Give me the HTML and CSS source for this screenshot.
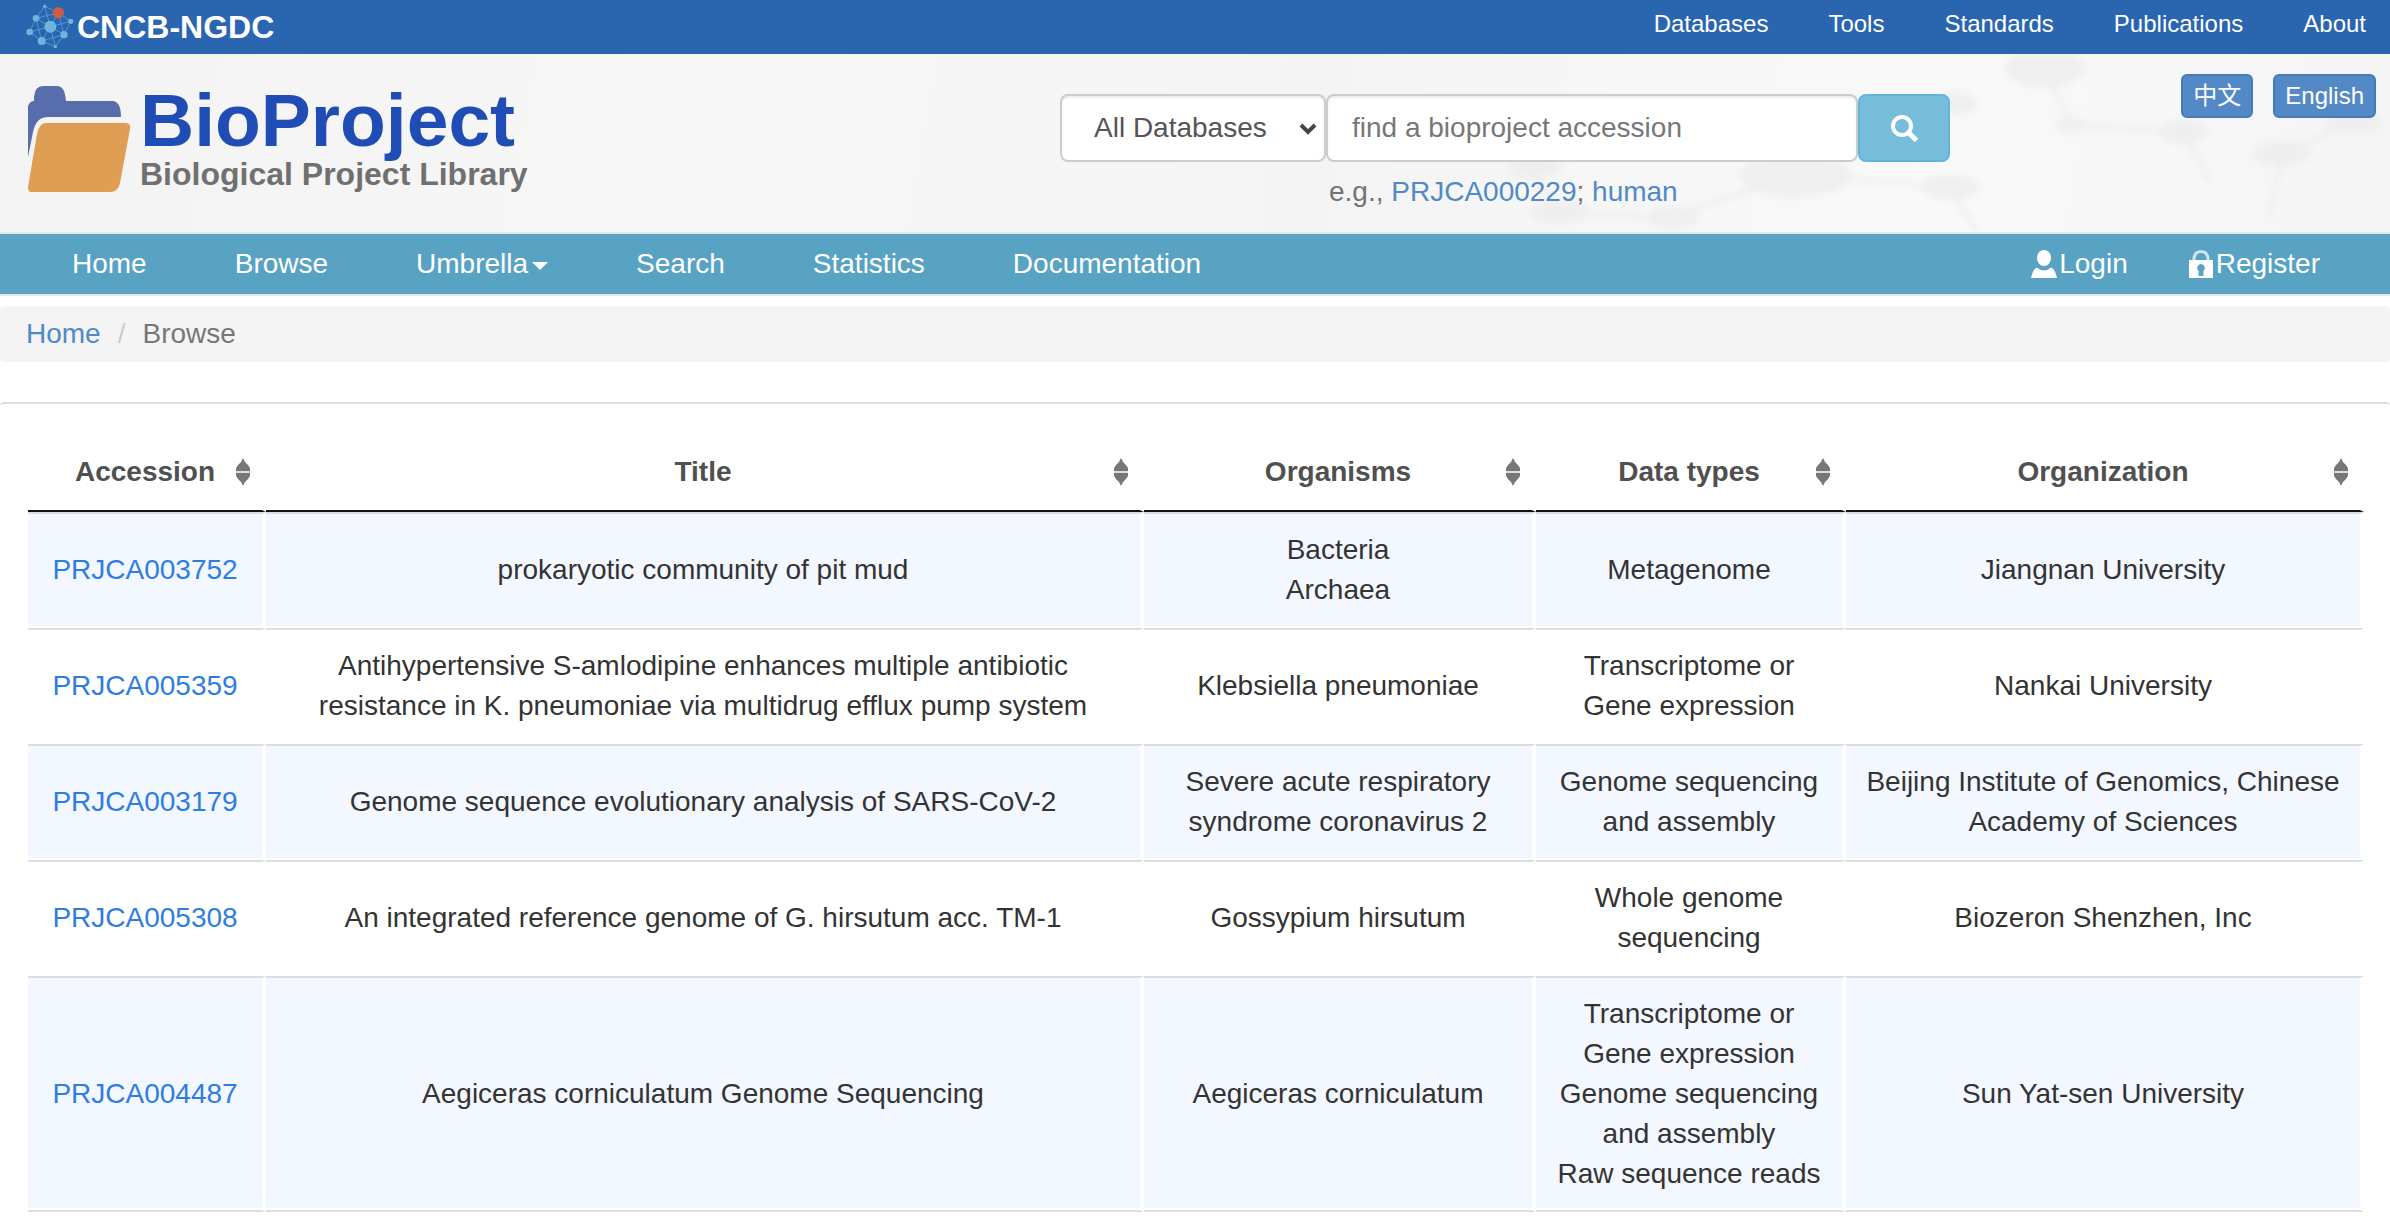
FILE: index.html
```html
<!DOCTYPE html>
<html lang="en">
<head>
<meta charset="utf-8">
<meta name="viewport" content="width=device-width, initial-scale=1">
<title>Browse - BioProject - CNCB-NGDC</title>
<link rel="stylesheet" href="styles.css">
</head>
<body>
<svg class="sprite" aria-hidden="true">
  <symbol id="sort" viewBox="0 0 14 28"><path d="M7 0L9 4L12 7L14 10V13H0V10L2 7L5 4Z M7 28L9 24L12 21L14 18V15H0V18L2 21L5 24Z" fill="#777"/><path d="M0 13H14V15H0Z" fill="#ddd"/></symbol>
</svg>

<div class="topbar">
  <a class="org" href="#">
    <svg class="org-mark" viewBox="78 12 144 132" aria-hidden="true">
      <g stroke="#6db5dc" stroke-width="2.500" fill="none" opacity=".75">
        <path d="M134 19L175 38L212 64L192 104L166 140L125 123L89 96L108 55Z"/>
        <path d="M151 80L134 19M151 80L175 38M151 80L108 55M151 80L212 64M151 80L89 96M151 80L192 104M151 80L125 123M151 80L166 140M108 55L125 123M175 38L192 104M125 123L192 104M108 55L175 38"/>
      </g>
      <g fill="#6db5dc">
        <circle cx="134" cy="19" r="5"/><circle cx="108" cy="55" r="10"/><circle cx="212" cy="64" r="8"/>
        <circle cx="151" cy="80" r="18"/><circle cx="89" cy="96" r="10"/><circle cx="192" cy="104" r="11"/>
        <circle cx="125" cy="123" r="12"/><circle cx="166" cy="140" r="5"/>
      </g>
      <circle cx="175" cy="38" r="17" fill="#cd5b45"/>
    </svg>
    <span>CNCB-NGDC</span>
  </a>
  <nav class="toplinks" aria-label="Resources">
    <a href="#">Databases</a><a href="#">Tools</a><a href="#">Standards</a><a href="#">Publications</a><a href="#">About</a>
  </nav>
</div>

<header class="masthead">
  <svg class="molecules" viewBox="0 0 880 178" aria-hidden="true">
    <g stroke="#ededed" stroke-width="6" fill="none">
      <path d="M534 18L562 71L673 78L700 126M772 99L760 160M772 99L843 69M285 121L440 133L467 178M285 121L190 153L163 164L50 158L21 113"/>
    </g>
    <g fill="#ececec">
      <ellipse cx="535" cy="14" rx="40" ry="20"/><ellipse cx="562" cy="71" rx="18" ry="8"/>
      <ellipse cx="673" cy="78" rx="25" ry="12"/><ellipse cx="772" cy="99" rx="30" ry="13"/>
      <ellipse cx="843" cy="69" rx="30" ry="11"/><ellipse cx="440" cy="133" rx="30" ry="13"/>
      <ellipse cx="285" cy="121" rx="56" ry="23"/><ellipse cx="163" cy="164" rx="27" ry="12"/>
      <ellipse cx="50" cy="158" rx="30" ry="12"/><ellipse cx="21" cy="113" rx="30" ry="12"/>
      <ellipse cx="445" cy="49" rx="24" ry="12"/>
    </g>
  </svg>
  <a class="brand" href="#">
    <svg class="folder" viewBox="0 0 104 108" aria-hidden="true">
      <path d="M0 22Q2 17 6 17V13Q7 2 15 2H29Q37 2 38 17H85Q93 18 93 33H20Q8 33 5 48L0 73Z" fill="#586eac"/>
      <path d="M17 39H98Q103 39 102 45L92 99Q90 108 82 108H3Q0 108 0 103L9 50Q11 40 17 39Z" fill="#e09d54"/>
    </svg>
    <span class="brand-text">
      <span class="brand-name">BioProject</span>
      <span class="brand-sub">Biological Project Library</span>
    </span>
  </a>
  <div class="search">
    <form class="search-form" onsubmit="return false">
      <div class="select-wrap">
        <select class="field" aria-label="Database"><option>All Databases</option></select>
        <svg class="chevron" viewBox="0 0 18 12" aria-hidden="true"><path d="M2 2L9 9L16 2" fill="none" stroke="#444" stroke-width="4"/></svg>
      </div>
      <input class="field query" type="text" aria-label="Search term" placeholder="find a bioproject accession">
      <button class="go" type="submit" aria-label="Search">
        <svg viewBox="0 0 28 28" aria-hidden="true"><g fill="none" stroke="#fff"><circle cx="12" cy="12" r="9" stroke-width="4"/><path d="M18.500 18.500L26.500 26.500" stroke-width="5"/></g></svg>
      </button>
    </form>
    <p class="hint">e.g., <a href="#">PRJCA000229</a>; <a href="#">human</a></p>
  </div>
  <div class="langs">
    <button type="button" lang="zh">中文</button>
    <button type="button">English</button>
  </div>
</header>

<nav class="mainnav" aria-label="Main">
  <ul class="menu">
    <li><a href="#">Home</a></li>
    <li><a href="#">Browse</a></li>
    <li><a href="#">Umbrella<span class="caret"></span></a></li>
    <li><a href="#">Search</a></li>
    <li><a href="#">Statistics</a></li>
    <li><a href="#">Documentation</a></li>
  </ul>
  <ul class="account">
    <li><a href="#">
      <svg viewBox="0 0 26 28" aria-hidden="true"><ellipse cx="13" cy="8" rx="7" ry="8" fill="#fff"/><path d="M0 28Q2 19 6 17.500Q9 20.500 13 20.500T20 17.500Q24 19 26 28Z" fill="#fff"/></svg>Login</a></li>
    <li><a href="#">
      <svg viewBox="0 0 26 28" aria-hidden="true"><path d="M6 11V8Q7 1.500 13 1.500T20 8V11" fill="none" stroke="#cfe5ee" stroke-width="3"/><path fill-rule="evenodd" d="M1 10H25V28H1ZM13 14A4 4 0 0 0 10.500 21V26H15.500V21A4 4 0 0 0 13 14Z" fill="#fff"/></svg>Register</a></li>
  </ul>
</nav>

<ol class="breadcrumb">
  <li><a href="#">Home</a></li>
  <li><span class="slash">/</span>Browse</li>
</ol>

<main class="panel">
  <table class="projects">
    <colgroup><col class="c-acc"><col class="c-title"><col class="c-orgm"><col class="c-type"><col class="c-org"></colgroup>
    <thead>
      <tr>
        <th scope="col"><button class="sort" type="button"><span>Accession</span><svg aria-hidden="true"><use href="#sort"/></svg></button></th>
        <th scope="col"><button class="sort" type="button"><span>Title</span><svg aria-hidden="true"><use href="#sort"/></svg></button></th>
        <th scope="col"><button class="sort" type="button"><span>Organisms</span><svg aria-hidden="true"><use href="#sort"/></svg></button></th>
        <th scope="col"><button class="sort" type="button"><span>Data types</span><svg aria-hidden="true"><use href="#sort"/></svg></button></th>
        <th scope="col"><button class="sort" type="button"><span>Organization</span><svg aria-hidden="true"><use href="#sort"/></svg></button></th>
      </tr>
    </thead>
    <tbody>
      <tr>
        <td><a href="#">PRJCA003752</a></td>
        <td>prokaryotic community of pit mud</td>
        <td>Bacteria<br>Archaea</td>
        <td>Metagenome</td>
        <td>Jiangnan University</td>
      </tr>
      <tr>
        <td><a href="#">PRJCA005359</a></td>
        <td>Antihypertensive S-amlodipine enhances multiple antibiotic resistance in K. pneumoniae via multidrug efflux pump system</td>
        <td>Klebsiella pneumoniae</td>
        <td>Transcriptome or Gene expression</td>
        <td>Nankai University</td>
      </tr>
      <tr>
        <td><a href="#">PRJCA003179</a></td>
        <td>Genome sequence evolutionary analysis of SARS-CoV-2</td>
        <td>Severe acute respiratory syndrome coronavirus 2</td>
        <td>Genome sequencing and assembly</td>
        <td>Beijing Institute of Genomics, Chinese Academy of Sciences</td>
      </tr>
      <tr>
        <td><a href="#">PRJCA005308</a></td>
        <td>An integrated reference genome of G. hirsutum acc. TM-1</td>
        <td>Gossypium hirsutum</td>
        <td>Whole genome sequencing</td>
        <td>Biozeron Shenzhen, Inc</td>
      </tr>
      <tr>
        <td><a href="#">PRJCA004487</a></td>
        <td>Aegiceras corniculatum Genome Sequencing</td>
        <td>Aegiceras corniculatum</td>
        <td>Transcriptome or Gene expression<br>Genome sequencing and assembly<br>Raw sequence reads</td>
        <td>Sun Yat-sen University</td>
      </tr>
    </tbody>
  </table>
</main>
</body>
</html>
```
FILE: styles.css
```css
* { box-sizing: border-box; }

body {
  margin: 0;
  background: #fff;
  color: #333;
  font: 28px/40px "Liberation Sans", Arial, "Noto Sans CJK SC", sans-serif;
}

a { color: #5089c7; text-decoration: none; }
ul, ol, p { margin: 0; padding: 0; list-style: none; }
button, input, select { font: inherit; }
button { cursor: pointer; }
.sprite { display: none; }

/* Top bar */
.topbar {
  display: flex;
  justify-content: space-between;
  height: 54px;
  padding: 0 24px 0 26px;
  background: #2a65b0;
}
.topbar a { color: #fff; }
.org {
  display: flex;
  align-items: center;
  gap: 3px;
  font-size: 32px;
  font-weight: bold;
}
.org-mark { width: 48px; height: 44px; margin-bottom: 2px; }
.toplinks {
  display: flex;
  gap: 60px;
  font-size: 24px;
  line-height: 48px;
}

/* Masthead */
.masthead {
  position: relative;
  display: grid;
  grid-template-columns: 1fr 890px 426px;
  align-items: start;
  padding: 20px 14px 20px 28px;
  background: linear-gradient(100deg, #f3f3f3, #f7f7f7 30%, #f4f4f4 55%, #f9f9f9 80%, #f5f5f5);
  overflow: hidden;
}
.molecules {
  position: absolute;
  top: 0;
  right: 0;
  width: 880px;
  height: 178px;
  opacity: .7;
  filter: blur(3px);
}
.brand, .search, .langs { position: relative; }
.brand { display: flex; gap: 8px; padding-top: 10px; }
.folder { width: 104px; height: 108px; }
.brand-text { display: flex; flex-direction: column; font-weight: bold; }
.brand-name { color: #1f4db5; font-size: 75px; line-height: 72px; }
.brand-sub { color: #707070; font-size: 32px; line-height: 36px; }

.search { padding-top: 20px; }
.search-form { display: flex; }
.select-wrap { position: relative; width: 266px; }
.field {
  height: 68px;
  border: 2px solid #ccc;
  border-radius: 8px;
  background: #fff;
  color: #555;
  box-shadow: inset 0 2px 2px rgba(0, 0, 0, .075);
}
select.field { width: 100%; padding: 0 32px; appearance: none; }
.chevron {
  position: absolute;
  top: 29px;
  right: 9px;
  width: 18px;
  height: 12px;
  pointer-events: none;
}
.query { flex: 1; min-width: 0; padding: 0 24px; }
.query::placeholder { color: #777; opacity: 1; }
.go {
  display: flex;
  align-items: center;
  justify-content: center;
  width: 92px;
  border: 2px solid #63b5d6;
  border-radius: 8px;
  background: #75bddb;
}
.go svg { width: 28px; height: 28px; }
.hint { margin: 10px 0 0 269px; color: #737373; }

.langs { display: flex; justify-content: flex-end; gap: 20px; }
.langs button {
  height: 44px;
  padding: 0 10px;
  border: 2px solid #457bb8;
  border-radius: 6px;
  background: #5389c6;
  color: #fff;
  font-size: 24px;
  line-height: 36px;
}

/* Main navigation */
.mainnav {
  display: flex;
  justify-content: space-between;
  padding: 0 70px 0 72px;
  border: solid #e7e7e7;
  border-width: 2px 0;
  background: #58a2c4;
  line-height: 60px;
}
.mainnav a { display: flex; align-items: center; color: #fff; }
.menu { display: flex; gap: 88px; }
.caret {
  margin: 4px 0 0 4px;
  border: solid transparent;
  border-width: 8px 8px 0;
  border-top-color: #fff;
}
.account { display: flex; gap: 60px; }
.account svg { width: 26px; height: 28px; margin-right: 2px; }

/* Breadcrumb */
.breadcrumb {
  display: flex;
  margin-top: 10px;
  padding: 8px 26px;
  border-radius: 4px;
  background: #f4f4f4;
  color: #777;
}
.slash { padding: 0 17px; color: #ccc; }

/* Results */
.panel {
  margin-top: 40px;
  padding: 30px 26px 0 28px;
  border-top: 2px solid #ddd;
  border-radius: 4px 4px 0 0;
}
.projects {
  width: 100%;
  border-collapse: separate;
  border-spacing: 0;
  table-layout: fixed;
  text-align: center;
}
.c-acc { width: 238px; }
.c-title { width: 878px; }
.c-orgm { width: 392px; }
.c-type { width: 310px; }
.c-org { width: 518px; }

.projects th {
  padding: 18px 12px;
  border: solid #fff;
  border-width: 0 4px 2px 0;
  border-bottom-color: #111;
  line-height: 0;
}
.sort {
  display: grid;
  grid-template-columns: 14px 1fr 14px;
  align-items: center;
  width: 100%;
  height: 40px;
  padding: 0;
  border: 0;
  background: none;
  color: #505050;
  font-weight: bold;
  line-height: 40px;
}
.sort span { grid-column: 2; }
.sort svg { width: 14px; height: 28px; }

.projects td {
  padding: 16px;
  border: solid #fff;
  border-width: 2px 4px 2px 0;
  border-top-color: #ddd;
  vertical-align: middle;
}
.projects td:first-child { padding: 16px 8px; }
.projects tbody tr:nth-child(odd) td { background: #f3f7ff; }
.projects tbody tr:last-child td {
  border-bottom-color: #ddd;
  box-shadow: inset 0 -2px #fff;
}
.projects td a { color: #307de2; }
```
